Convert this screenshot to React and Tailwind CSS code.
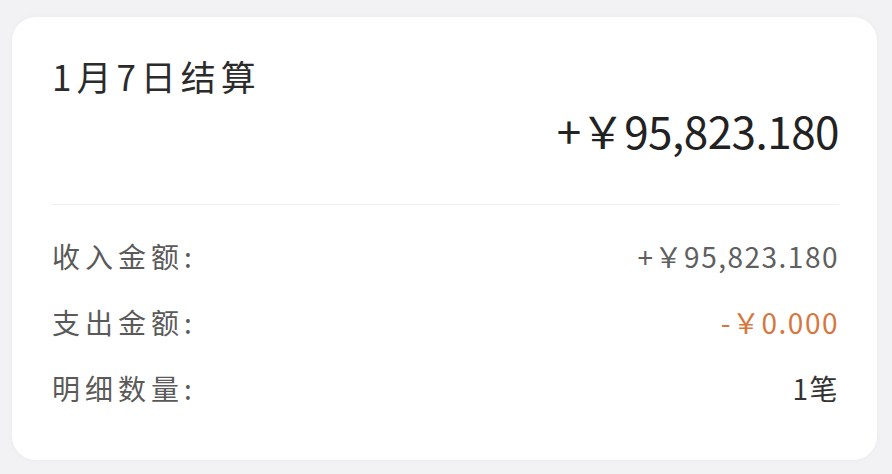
import React from 'react';

const rows = [
  { label: '收入金额:', value: '+￥95,823.180', tone: 'text-[#5f5f5f]' },
  { label: '支出金额:', value: '-￥0.000', tone: 'text-[#d6773f]' },
  { label: '明细数量:', value: '1笔', tone: 'text-[#333333]' },
];

export default function App() {
  return (
    <div
      className="w-[892px] h-[474px] bg-[#f2f2f4] pt-[17px] pl-[12px] pr-[15px] overflow-hidden"
      style={{ fontFamily: '"Noto Sans CJK SC", "Noto Sans", sans-serif' }}
    >
      {/* settlement card */}
      <div className="bg-white rounded-[24px] h-[443px] pl-[40px] pr-[38px] pt-[39px] shadow-[0_0_6px_rgba(0,0,0,0.03)]">
        <h1 className="text-[35px] leading-[40px] tracking-[5px] text-[#2b2b2b] font-normal">
          1月7日结算
        </h1>

        <div className="mt-[9px] flex justify-end">
          <span className="text-[44px] leading-[50px] tracking-[-0.5px] text-[#222222]">
            +￥95,823.180
          </span>
        </div>

        <div className="mt-[49px] h-px bg-[#efefef]" />

        <div className="mt-[33px] flex flex-col gap-[30px]">
          {rows.map((r) => (
            <div key={r.label} className="flex items-center justify-between h-[36px]">
              <span className="text-[28px] tracking-[5px] text-[#5a5a5a]">{r.label}</span>
              <span className={`text-[28px] tracking-[1.5px] ${r.tone}`}>{r.value}</span>
            </div>
          ))}
        </div>
      </div>
    </div>
  );
}
